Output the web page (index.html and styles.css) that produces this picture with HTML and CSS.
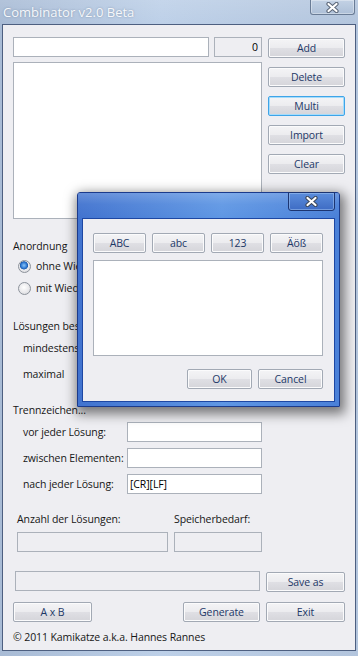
FILE: index.html
```html
<!DOCTYPE html>
<html lang="de">
<head>
    <meta charset="UTF-8">
    <title>Combinator v2.0 Beta</title>
    <link rel="stylesheet" href="styles.css">
</head>
<body>
    <div class="window">
        <div class="titlebar">
            <span class="title">Combinator v2.0 Beta</span>
            <div class="close-btn">
                <svg width="13" height="11" viewBox="0 0 13 11">
                    <path d="M2.5 2 L10.5 9 M10.5 2 L2.5 9" stroke="#5a6577" stroke-width="4.2" stroke-linecap="round"/>
                    <path d="M2.5 2 L10.5 9 M10.5 2 L2.5 9" stroke="#ffffff" stroke-width="2.2" stroke-linecap="round"/>
                </svg>
            </div>
        </div>

        <div class="client">
            <div class="top">
                <div class="left-col">
                    <div class="entry-row">
                        <div class="field entry"></div>
                        <div class="field ro count">0</div>
                    </div>
                    <div class="field listbox"></div>
                </div>
                <div class="right-col">
                    <button class="btn">Add</button>
                    <button class="btn">Delete</button>
                    <button class="btn focus">Multi</button>
                    <button class="btn">Import</button>
                    <button class="btn">Clear</button>
                </div>
            </div>

            <div class="caption anordnung">Anordnung</div>
            <div class="radio-row">
                <span class="radio on"></span>ohne Wiederholung
            </div>
            <div class="radio-row second">
                <span class="radio"></span>mit Wiederholung
            </div>

            <div class="caption loesungen">Lösungen bestehen aus...</div>
            <div class="form-row first">
                <span class="row-label">mindestens</span>
                <div class="field short"></div>
            </div>
            <div class="form-row">
                <span class="row-label">maximal</span>
                <div class="field short"></div>
            </div>

            <div class="caption trenn">Trennzeichen...</div>
            <div class="form-row first">
                <span class="row-label">vor jeder Lösung:</span>
                <div class="field sep"></div>
            </div>
            <div class="form-row">
                <span class="row-label">zwischen Elementen:</span>
                <div class="field sep"></div>
            </div>
            <div class="form-row">
                <span class="row-label">nach jeder Lösung:</span>
                <div class="field sep">[CR][LF]</div>
            </div>

            <div class="stats-labels">
                <span class="stat-a">Anzahl der Lösungen:</span>
                <span>Speicherbedarf:</span>
            </div>
            <div class="stats-boxes">
                <div class="field ro stat-count"></div>
                <div class="field ro stat-mem"></div>
            </div>

            <div class="save-row">
                <div class="field ro path"></div>
                <button class="btn wide">Save as</button>
            </div>

            <div class="action-row">
                <button class="btn wide">A x B</button>
                <button class="btn generate">Generate</button>
                <button class="btn wide">Exit</button>
            </div>

            <div class="copyright">© 2011 Kamikatze a.k.a. Hannes Rannes</div>
        </div>

        <!-- Multi dialog -->
        <div class="dialog">
            <div class="dlg-title">
                <div class="dlg-close">
                    <svg width="13" height="11" viewBox="0 0 13 11">
                        <path d="M2.5 2 L10.5 9 M10.5 2 L2.5 9" stroke="#3a4658" stroke-width="4.2" stroke-linecap="round"/>
                        <path d="M2.5 2 L10.5 9 M10.5 2 L2.5 9" stroke="#ffffff" stroke-width="2.2" stroke-linecap="round"/>
                    </svg>
                </div>
            </div>
            <div class="dlg-client">
                <div class="charset-row">
                    <button class="btn charset">ABC</button>
                    <button class="btn charset">abc</button>
                    <button class="btn charset">123</button>
                    <button class="btn charset">Äöß</button>
                </div>
                <div class="field dlg-text"></div>
                <div class="dlg-buttons">
                    <button class="btn dlg-btn">OK</button>
                    <button class="btn dlg-btn">Cancel</button>
                </div>
            </div>
        </div>
    </div>
</body>
</html>
```

FILE: styles.css
```css
:root {
    --client-bg: #eeeef2;
    --field-border: #abb1ba;
    --btn-text: #1d3867;
    --label-text: #161616;
}

body {
    margin: 0;
    font-family: 'Open Sans', 'Noto Sans', sans-serif;
    font-size: 10.5px;
    letter-spacing: -0.1px;
    color: var(--label-text);
}

.window {
    position: relative;
    width: 358px;
    height: 656px;
    overflow: hidden;
    display: flex;
    flex-direction: column;
    background: linear-gradient(to right, #a8bbd5, #bdd0e8 45%, #b3c5dd);
}

.titlebar {
    height: 24px;
    display: flex;
    align-items: flex-start;
    background: linear-gradient(rgba(255, 255, 255, 0.12), rgba(255, 255, 255, 0));
}

.title {
    margin: 3px 0 0 3px;
    font-size: 13px;
    letter-spacing: 0;
    color: #f6f8fb;
    text-shadow: 0 0 2px rgba(80, 100, 130, 0.55);
}

.close-btn {
    margin-left: auto;
    margin-right: 3px;
    width: 43px;
    height: 14px;
    border: 1px solid #6a7c96;
    border-top: none;
    border-radius: 0 0 3px 3px;
    box-shadow: inset 0 0 0 1px rgba(255, 255, 255, 0.35);
    background: linear-gradient(#c3d2e5, #adbfd7);
    display: flex;
    justify-content: center;
    align-items: center;
}

.client {
    flex: 1;
    margin: 0 2px 5px;
    border: 1px solid #4d5f80;
    background: var(--client-bg);
    padding: 12px 10px 0;
}

/* generic controls */
.field {
    box-sizing: border-box;
    height: 20px;
    border: 1px solid var(--field-border);
    background: #fff;
    line-height: 18px;
    color: #000;
}

.field.ro {
    background: var(--client-bg);
}

.btn {
    box-sizing: border-box;
    height: 20px;
    padding: 0;
    border: 1px solid #a2a9b4;
    border-radius: 2px;
    background: linear-gradient(#f4f4f6 0%, #ececef 48%, #dfdfe4 52%, #d5d5da 100%);
    box-shadow: inset 0 0 0 1px #fbfbfc;
    font: inherit;
    letter-spacing: inherit;
    color: var(--btn-text);
    cursor: pointer;
}

.btn.focus {
    border-color: #3ea4e8;
    box-shadow: inset 0 0 0 1px #a6dcfb;
}

/* top area */
.top {
    display: flex;
    gap: 6px;
}

.left-col {
    width: 249px;
    display: flex;
    flex-direction: column;
    gap: 5px;
}

.entry-row {
    display: flex;
    gap: 5px;
}

.entry {
    width: 196px;
}

.count {
    width: 48px;
    text-align: right;
    padding-right: 3px;
}

.listbox {
    height: 157px;
}

.right-col {
    width: 77px;
    padding-top: 1px;
    display: flex;
    flex-direction: column;
    gap: 9px;
}

/* groups */
.caption {
    height: 16px;
    line-height: 16px;
}

.anordnung {
    margin-top: 19px;
}

.radio-row {
    height: 18px;
    margin-top: 3px;
    padding-left: 5px;
    display: flex;
    align-items: center;
    gap: 5px;
    white-space: nowrap;
}

.radio-row.second {
    margin-top: 4px;
}

.radio {
    box-sizing: border-box;
    width: 13px;
    height: 13px;
    border-radius: 50%;
    border: 1px solid #8c929b;
    background: radial-gradient(circle at 45% 40%, #ffffff 0%, #e9e9ec 55%, #cfd0d5 100%);
}

.radio.on {
    background:
        radial-gradient(circle at 45% 40%, #8cc4f6 0%, #3a84da 2.5px, #1d5cb0 3.8px, rgba(0, 0, 0, 0) 4.4px),
        radial-gradient(circle at 45% 40%, #ffffff 0%, #e9e9ec 55%, #cfd0d5 100%);
}

.loesungen {
    margin-top: 21px;
}

.trenn {
    margin-top: 18px;
}

.form-row {
    height: 20px;
    margin-top: 6px;
    padding-left: 10px;
    display: flex;
    align-items: center;
}

.form-row.first {
    margin-top: 4px;
}

.row-label {
    width: 104px;
    white-space: nowrap;
}

.short {
    width: 60px;
}

.sep {
    width: 135px;
    padding-left: 2px;
}

/* statistics */
.stats-labels {
    margin-top: 17px;
    height: 16px;
    line-height: 16px;
    padding-left: 4px;
    display: flex;
}

.stat-a {
    width: 157px;
}

.stats-boxes {
    margin-top: 5px;
    padding-left: 4px;
    display: flex;
    gap: 6px;
}

.stat-count {
    width: 151px;
}

.stat-mem {
    width: 88px;
}

.save-row {
    margin-top: 19px;
    padding-left: 2px;
    display: flex;
    gap: 6px;
}

.path {
    width: 245px;
}

.save-row .btn {
    margin-top: 1px;
}

.wide {
    width: 79px;
}

.action-row {
    margin-top: 10px;
    display: flex;
    gap: 6px;
}

.generate {
    width: 77px;
    margin-left: auto;
}

.copyright {
    margin-top: 7px;
    height: 16px;
    line-height: 16px;
}

/* Multi dialog */
.dialog {
    position: absolute;
    left: 77px;
    top: 192px;
    width: 263px;
    box-sizing: border-box;
    border: 1px solid #1b3b8c;
    border-radius: 3px 3px 0 0;
    padding: 0 4px 4px;
    background: linear-gradient(to right, #4173cf, #5f97e4 55%, #4a80d8);
    box-shadow: 2px 4px 12px 3px rgba(0, 0, 0, 0.5);
}

.dlg-title {
    height: 25px;
    display: flex;
    justify-content: flex-end;
    background: linear-gradient(rgba(255, 255, 255, 0.2), rgba(255, 255, 255, 0.05) 45%, rgba(255, 255, 255, 0));
    margin: 0 -4px;
    padding: 0 4px;
}

.dlg-close {
    width: 45px;
    height: 17px;
    margin-top: -1px;
    border: 1px solid #1c3572;
    border-radius: 0 0 3px 3px;
    box-shadow: inset 0 0 0 1px rgba(160, 195, 240, 0.55);
    background: linear-gradient(#5b8ddc, #3e6cc4);
    display: flex;
    justify-content: center;
    align-items: center;
}

.dlg-client {
    height: 184px;
    box-sizing: border-box;
    border: 1px solid #1d47a3;
    background: var(--client-bg);
    padding: 14px 10px 0;
}

.charset-row {
    display: flex;
    gap: 6px;
}

.charset {
    width: 53px;
}

.dlg-text {
    width: 230px;
    height: 96px;
    margin-top: 7px;
}

.dlg-buttons {
    margin-top: 13px;
    display: flex;
    justify-content: flex-end;
    gap: 6px;
    padding-right: 1px;
}

.dlg-btn {
    width: 65px;
}
```
